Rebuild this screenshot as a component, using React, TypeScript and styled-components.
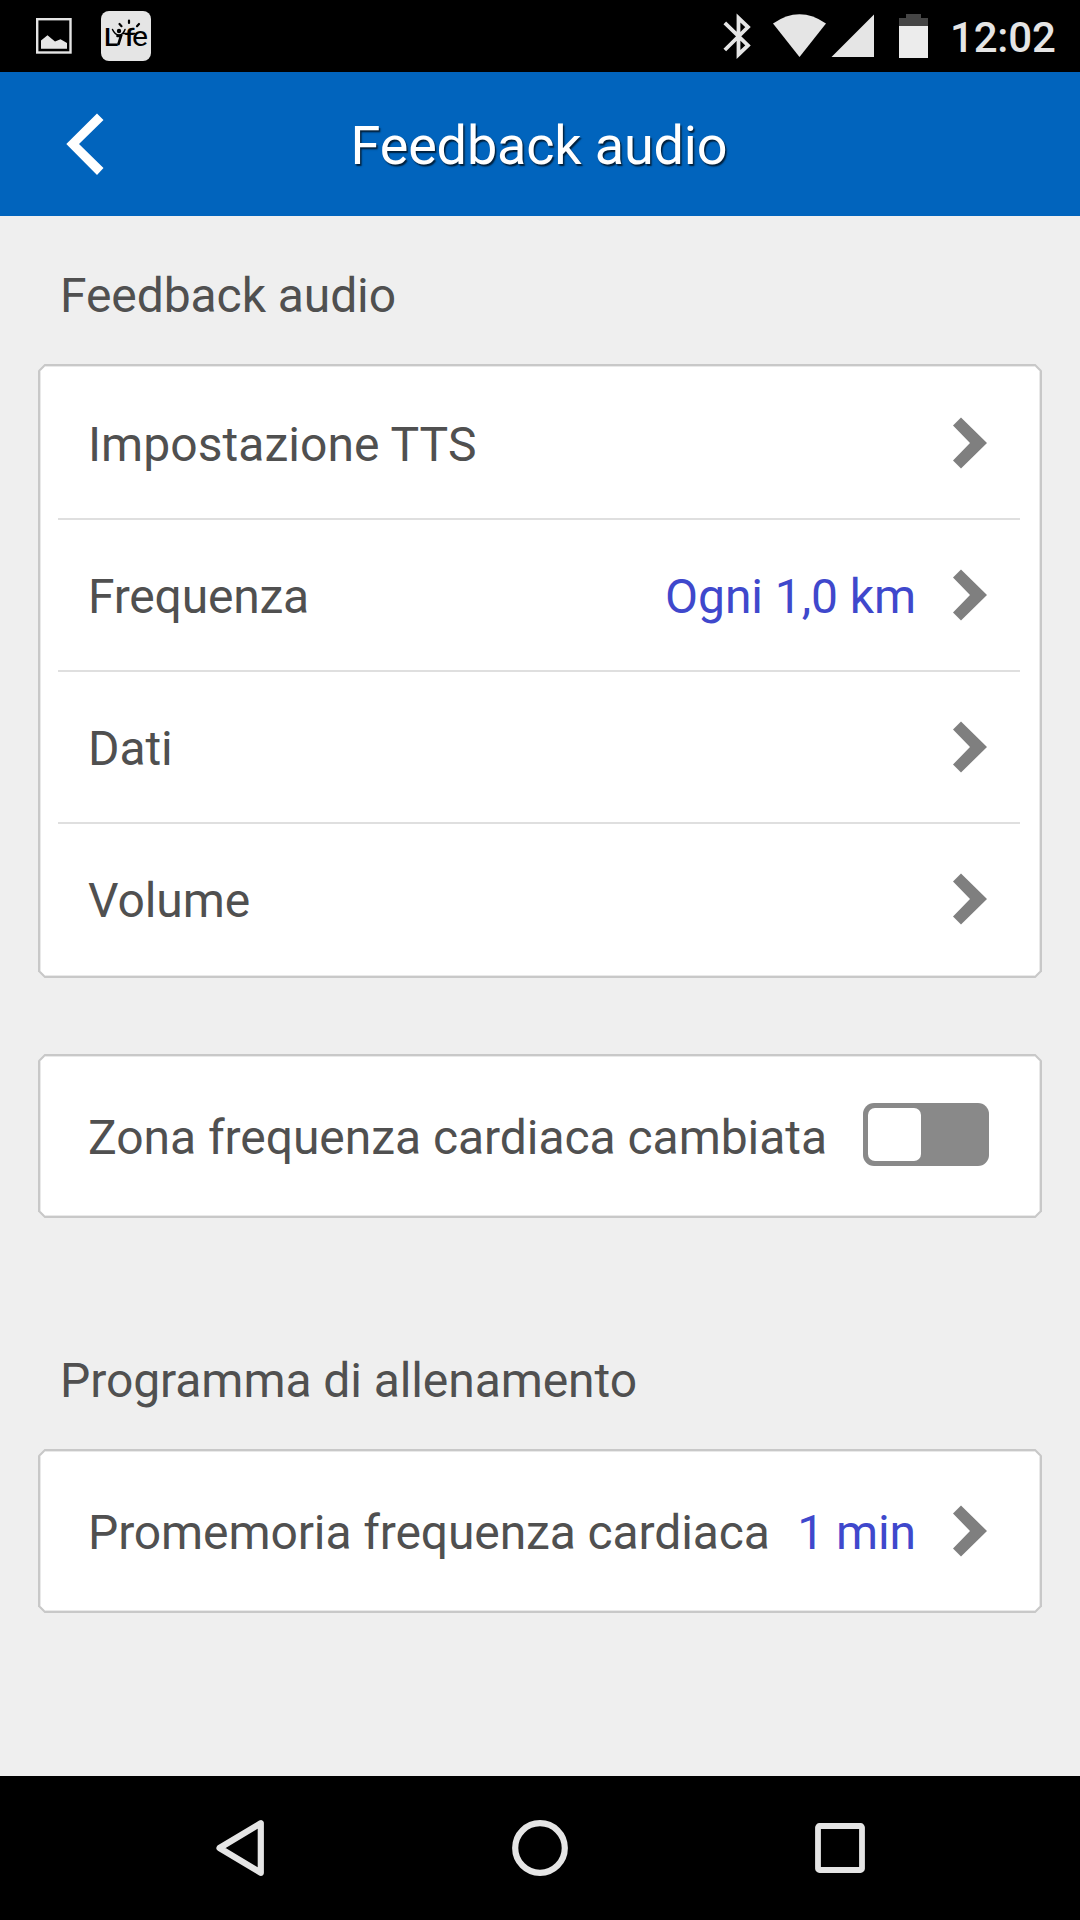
import React from "react";
import styled, { createGlobalStyle } from "styled-components";

const GlobalStyle = createGlobalStyle`
  *, *::before, *::after { box-sizing: border-box; }
  body { margin: 0; background: #efefef; font-family: Roboto, "Liberation Sans", sans-serif; }
`;

const Screen = styled.div`
  display: flex;
  flex-direction: column;
  width: 1080px;
  height: 1920px;
  overflow: hidden;
  background: #efefef;
  color: #505050;
`;

const StatusBar = styled.div`
  display: flex;
  align-items: flex-start;
  justify-content: space-between;
  height: 72px;
  flex: none;
  padding: 0 24px 0 35px;
  background: #000;
`;

const Notifications = styled.div`
  display: flex;
  gap: 29px;
  padding-top: 11px;
  svg { display: block; }
`;

const SystemIcons = styled.svg`
  display: block;
  width: 210px;
  height: 72px;
  margin-right: 17px;
`;

const SystemArea = styled.div`
  display: flex;
`;

const Clock = styled.span`
  width: 106px;
  font-size: 42px;
  font-weight: 500;
  line-height: 76px;
  letter-spacing: -0.2px;
  white-space: nowrap;
  color: #e5e5e5;
`;

const Header = styled.header`
  display: grid;
  grid-template-columns: 180px 1fr 180px;
  align-items: center;
  height: 144px;
  flex: none;
  background: #0164bd;
`;

const BackButton = styled.button`
  display: flex;
  padding: 0 0 0 63px;
  border: 0;
  background: none;
`;

const Title = styled.h1`
  margin: 0;
  padding: 3px 2px 0 0;
  font-size: 54px;
  font-weight: 400;
  line-height: 64px;
  letter-spacing: -0.17px;
  text-align: center;
  white-space: nowrap;
  color: #fff;
  text-shadow: 1.5px 1.5px 1.5px rgba(0, 0, 0, 0.7);
`;

const Content = styled.main`
  display: flex;
  flex-direction: column;
  flex: 1;
  padding: 0 38px;
`;

const SectionTitle = styled.h2<{ $top: number; $bottom: number }>`
  margin: 0;
  padding: ${(p) => p.$top}px 0 ${(p) => p.$bottom}px 22px;
  font-size: 48px;
  font-weight: 400;
  line-height: 56px;
  letter-spacing: -0.08px;
  white-space: nowrap;
`;

const bevel = (c: number) =>
  `polygon(${c}px 0, calc(100% - ${c}px) 0, 100% ${c}px, 100% calc(100% - ${c}px), calc(100% - ${c}px) 100%, ${c}px 100%, 0 calc(100% - ${c}px), 0 ${c}px)`;

const CardFrame = styled.section<{ $gap?: number }>`
  width: 1004px;
  padding: 2px;
  margin-bottom: ${(p) => p.$gap ?? 0}px;
  background: #c8c8c8;
  clip-path: ${bevel(6.5)};
`;

const CardBody = styled.div<{ $list?: boolean }>`
  padding: ${(p) => (p.$list ? "2px 20px 0 18px" : "0 20px 0 18px")};
  background: #fff;
  box-shadow: inset 0 0 0 1px #e9e9e9;
  clip-path: ${bevel(5.5)};
`;

const Row = styled.div<{ $line?: "visible" | "hidden" }>`
  display: flex;
  align-items: center;
  height: ${(p) => (p.$line ? 152 : 160)}px;
  padding: 0 33px 0 30px;
  border-bottom: ${(p) => (p.$line ? 2 : 0)}px solid ${(p) => (p.$line === "visible" ? "#dfdfdf" : "transparent")};
  font-size: 48px;
  line-height: 56px;
  letter-spacing: -0.08px;
  white-space: nowrap;
`;

const Label = styled.span<{ $tracking?: number }>`
  flex: 1;
  padding-top: 3px;
  letter-spacing: ${(p) => p.$tracking ?? -0.08}px;
`;

const Value = styled.span`
  padding: 3px 37px 0 0;
  color: #3f48cc;
`;

const Toggle = styled.span`
  display: flex;
  width: 126px;
  height: 63px;
  margin: 0 -2px 3px 0;
  padding: 5px;
  border-radius: 11px;
  background: #898989;
`;

const Knob = styled.span`
  width: 53px;
  height: 53px;
  border-radius: 7px;
  background: #fff;
`;

const NavBar = styled.nav`
  display: grid;
  grid-template-columns: repeat(3, 300px);
  place-items: center;
  justify-content: center;
  height: 144px;
  flex: none;
  background: #000;
  svg { display: block; }
`;

const Chevron = () => (
  <svg width="34" height="52" viewBox="0 0 34 52">
    <path d="M0 8.5 8 0.5 34 26 8 51.5 0 43.5 17 26Z" fill="#7f7f7f" />
  </svg>
);

const PictureIcon = () => (
  <svg width="37" height="50" viewBox="35 11 37 50">
    <rect x="37.2" y="19.2" width="33.3" height="33.3" fill="none" stroke="#e5e5e5" strokeWidth="2.4" />
    <path d="M41 40.5 47.5 35.2 55 41.5 60.5 39.2 67 43V48.7H41Z" fill="#e5e5e5" />
  </svg>
);

const LyfeIcon = () => (
  <svg width="50" height="50" viewBox="0 0 50 50">
    <rect width="50" height="50" rx="8" fill="#e5e5e5" />
    <g fontFamily="Roboto, sans-serif" fill="#000">
      <text x="3" y="35" fontSize="26.500" fontWeight="500">L</text>
      <text x="23.500" y="35" fontSize="24.500" fontWeight="500" textLength="10" lengthAdjust="spacingAndGlyphs">f</text>
      <text x="31" y="35" fontSize="28" textLength="16" lengthAdjust="spacingAndGlyphs">e</text>
    </g>
    <g stroke="#000" fill="none" strokeLinecap="round">
      <path d="M11.500 18.500Q14 24 18 24Q22 24 24 18.500M22 22.500H34" strokeWidth="1.500" />
      <path d="M16.500 25H20L17.500 33" strokeWidth="2.600" />
      <path d="M18.500 13 20.500 15.200M28 9.500V12M38 13 36 15.200" strokeWidth="2.200" />
    </g>
    <circle cx="18" cy="20" r="2.200" />
  </svg>
);

const StatusGlyphs = () => (
  <SystemIcons viewBox="723 0 210 72">
    <path d="M724.8 22.8 748 45.5 738.500 54.500V18L748 27 724.8 50" fill="none" stroke="#e5e5e5" strokeWidth="3.800" />
    <path d="M773 23.500Q799.500 5 826 23.500L799.500 57Z" fill="#e5e5e5" />
    <path d="M874 14.500V57H831.500Z" fill="#e5e5e5" />
    <path d="M899 26V18H906V14H921V18H928V26Z" fill="#454545" />
    <path d="M899 26H928V58H899Z" fill="#ececec" />
  </SystemIcons>
);

type Item = { label: string; value?: string; tracking?: number };

const feedbackItems: Item[] = [
  { label: "Impostazione TTS", tracking: 0.05 },
  { label: "Frequenza", value: "Ogni 1,0 km", tracking: -0.2 },
  { label: "Dati" },
  { label: "Volume" },
];

const LinkRow = ({ item, line }: { item: Item; line?: "visible" | "hidden" }) => (
  <Row $line={line}>
    <Label $tracking={item.tracking}>{item.label}</Label>
    {item.value && <Value>{item.value}</Value>}
    <Chevron />
  </Row>
);

export default function App() {
  return (
    <Screen>
      <GlobalStyle />
      <StatusBar>
        <Notifications>
          <PictureIcon />
          <LyfeIcon />
        </Notifications>
        <SystemArea>
          <StatusGlyphs />
          <Clock>12:02</Clock>
        </SystemArea>
      </StatusBar>
      <Header>
        <BackButton aria-label="Indietro">
          <svg width="42" height="64" viewBox="0 0 42 64">
            <path d="M34 1.500 40.500 8 16 32 40.500 56 34 63 3.300 32Z" fill="#fff" />
          </svg>
        </BackButton>
        <Title>Feedback audio</Title>
      </Header>
      <Content>
        <SectionTitle $top={52} $bottom={40}>Feedback audio</SectionTitle>
        <CardFrame $gap={76}>
          <CardBody $list>
            {feedbackItems.map((item, i) => (
              <LinkRow key={item.label} item={item} line={i < feedbackItems.length - 1 ? "visible" : "hidden"} />
            ))}
          </CardBody>
        </CardFrame>
        <CardFrame>
          <CardBody>
            <Row>
              <Label $tracking={-0.05}>Zona frequenza cardiaca cambiata</Label>
              <Toggle role="switch" aria-checked={false}>
                <Knob />
              </Toggle>
            </Row>
          </CardBody>
        </CardFrame>
        <SectionTitle $top={135} $bottom={40}>Programma di allenamento</SectionTitle>
        <CardFrame>
          <CardBody>
            <LinkRow item={{ label: "Promemoria frequenza cardiaca", value: "1 min", tracking: -0.11 }} />
          </CardBody>
        </CardFrame>
      </Content>
      <NavBar>
        <svg width="60" height="60" viewBox="210 1818 60 60">
          <path d="M260.800 1823.200V1872.800L219.500 1848Z" fill="none" stroke="#e5e5e5" strokeWidth="6.200" strokeLinejoin="round" />
        </svg>
        <svg width="60" height="60" viewBox="0 0 60 60">
          <circle cx="30" cy="30" r="24.800" fill="none" stroke="#e5e5e5" strokeWidth="6.200" />
        </svg>
        <svg width="60" height="60" viewBox="0 0 60 60">
          <rect x="8" y="8" width="44" height="44" rx="1.500" fill="none" stroke="#e5e5e5" strokeWidth="5.800" strokeLinejoin="round" />
        </svg>
      </NavBar>
    </Screen>
  );
}
